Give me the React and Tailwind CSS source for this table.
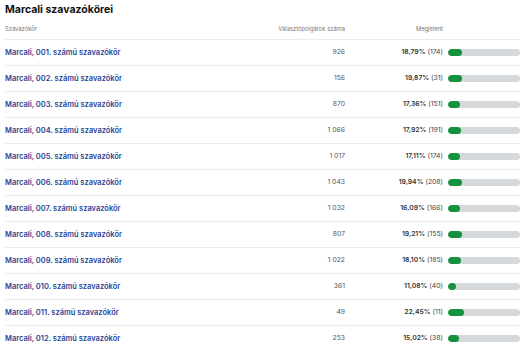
import React from "react";

const rows = [
  ["001", "926", "18,79%", "174", 18.79],
  ["002", "156", "19,87%", "31", 19.87],
  ["003", "870", "17,36%", "151", 17.36],
  ["004", "1 066", "17,92%", "191", 17.92],
  ["005", "1 017", "17,11%", "174", 17.11],
  ["006", "1 043", "19,94%", "208", 19.94],
  ["007", "1 032", "16,09%", "166", 16.09],
  ["008", "807", "19,21%", "155", 19.21],
  ["009", "1 022", "18,10%", "185", 18.1],
  ["010", "361", "11,08%", "40", 11.08],
  ["011", "49", "22,45%", "11", 22.45],
  ["012", "253", "15,02%", "38", 15.02],
];

export default function App() {
  return (
    <div className="w-[525px] h-[349px] overflow-hidden bg-white px-[5px] font-['Inter',sans-serif]">
      <h1 className="text-[10.5px] font-bold text-[#111] leading-none pt-[4.5px] h-[20px]">Marcali szavazókörei</h1>
      <div className="flex items-center h-[20px] border-b border-[#ececec] text-[5.8px] text-[#777]">
        <div className="flex-1">Szavazókör</div>
        <div className="w-[120px] text-right">Választópolgárok száma</div>
        <div className="w-[98px] text-right">Megjelent</div>
        <div className="w-[77px]"></div>
      </div>
      {rows.map(([n, voters, pct, cnt, v]) => (
        <div key={n} className="flex items-center h-[26px] border-b border-[#ececec]">
          <div className="flex-1 text-[7.5px] font-semibold text-[#2a4596]">Marcali, {n}. számú szavazókör</div>
          <div className="w-[120px] text-right text-[6.8px] text-[#555]">{voters}</div>
          <div className="w-[98px] text-right text-[6.8px] text-[#444]">
            <span className="font-semibold text-[#333]">{pct}</span> ({cnt})
          </div>
          <div className="w-[77px] pl-[5px]">
            <div className="h-[7px] w-[72px] rounded-full bg-[#d5d9db] overflow-hidden">
              <div className="h-full rounded-full bg-[#14923e]" style={{ width: `${v}%` }} />
            </div>
          </div>
        </div>
      ))}
    </div>
  );
}
